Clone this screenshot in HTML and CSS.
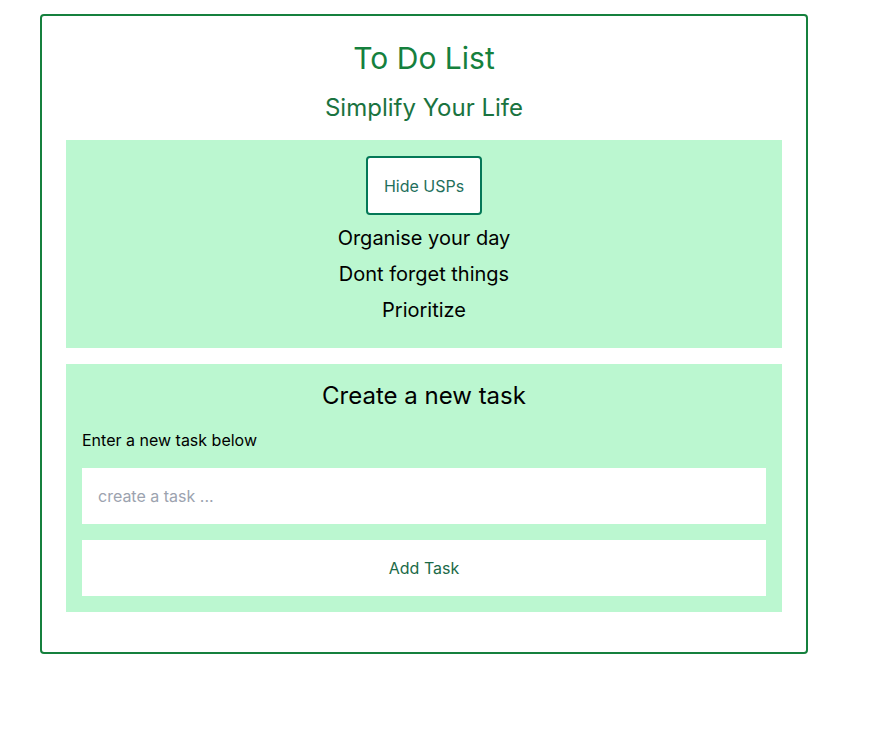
FILE: index.html
```html
<!DOCTYPE html>
<html lang="en">
<head>
<meta charset="utf-8">
<title>To Do List</title>
<link rel="stylesheet" href="styles.css">
</head>
<body>
<main class="card">
  <h1 class="title">To Do List</h1>
  <h2 class="subtitle">Simplify Your Life</h2>
  <section class="panel usps">
    <button class="hide-btn" type="button">Hide USPs</button>
    <ul class="usp-list">
      <li>Organise your day</li>
      <li>Dont forget things</li>
      <li>Prioritize</li>
    </ul>
  </section>
  <section class="panel create">
    <h3 class="create-title">Create a new task</h3>
    <label class="create-label" for="task">Enter a new task below</label>
    <input id="task" class="task-input" type="text" placeholder="create a task ...">
    <button class="add-btn" type="button">Add Task</button>
  </section>
</main>
</body>
</html>
```

FILE: styles.css
```css
* { box-sizing: border-box; }
html, body { margin: 0; padding: 0; background: #ffffff; }
body { font-family: Inter, "Noto Sans", sans-serif; color: #111827; }

.card {
  width: 768px;
  margin: 14px 0 0 40px;
  border: 2px solid #15803d;
  border-radius: 4px;
  padding: 24px 24px 40px;
  display: flex;
  flex-direction: column;
}

.title {
  margin: 0;
  font-size: 30px;
  line-height: 36px;
  font-weight: 400;
  text-align: center;
  color: #15803d;
}
.subtitle {
  margin: 16px 0 0;
  font-size: 24px;
  line-height: 32px;
  font-weight: 400;
  text-align: center;
  color: #1a7340;
}

.panel {
  background: #bbf7d0;
  padding: 16px;
}
.usps {
  margin-top: 16px;
  display: flex;
  flex-direction: column;
  align-items: center;
  padding-bottom: 20px;
}
.hide-btn {
  width: 116px;
  height: 59px;
  background: #ffffff;
  border: 2px solid #047857;
  border-radius: 4px;
  font-family: inherit;
  font-size: 16px;
  color: #1f6f5c;
  cursor: pointer;
}
.usp-list {
  list-style: none;
  margin: 5px 0 0;
  padding: 0;
  text-align: center;
}
.usp-list li {
  font-size: 20px;
  line-height: 28px;
  padding: 4px 0;
  color: #000000;
}

.create {
  margin-top: 16px;
  display: flex;
  flex-direction: column;
  gap: 16px;
}
.create-title {
  margin: 0;
  font-size: 24px;
  line-height: 32px;
  font-weight: 400;
  text-align: center;
  color: #000000;
}
.create-label {
  font-size: 16px;
  line-height: 24px;
  color: #000000;
}
.task-input {
  height: 56px;
  border: none;
  background: #ffffff;
  padding: 0 16px;
  font-family: inherit;
  font-size: 16px;
  color: #111827;
  outline: none;
}
.task-input::placeholder { color: #9ca3af; }
.add-btn {
  height: 56px;
  border: none;
  background: #ffffff;
  font-family: inherit;
  font-size: 16px;
  color: #1b6a48;
  cursor: pointer;
}
```
